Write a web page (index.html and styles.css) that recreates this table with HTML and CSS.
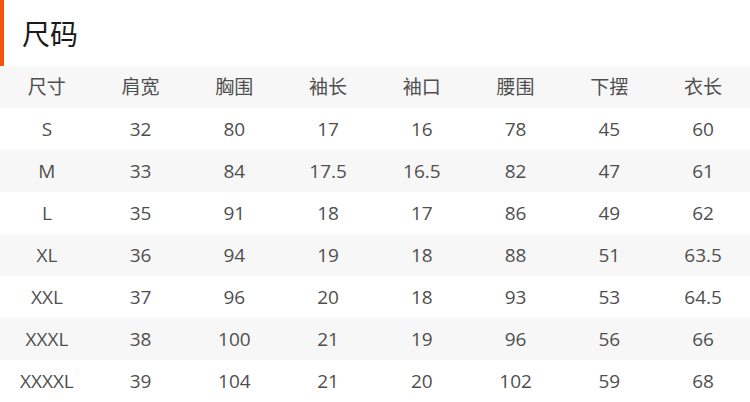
FILE: index.html
```html
<!DOCTYPE html>
<html lang="zh">
<head>
<meta charset="utf-8">
<link rel="stylesheet" href="styles.css">
</head>
<body>
<div class="title">尺码</div>
<table class="size">
<thead>
<tr><th>尺寸</th><th>肩宽</th><th>胸围</th><th>袖长</th><th>袖口</th><th>腰围</th><th>下摆</th><th>衣长</th></tr>
</thead>
<tbody>
<tr><td>S</td><td>32</td><td>80</td><td>17</td><td>16</td><td>78</td><td>45</td><td>60</td></tr>
<tr><td>M</td><td>33</td><td>84</td><td>17.5</td><td>16.5</td><td>82</td><td>47</td><td>61</td></tr>
<tr><td>L</td><td>35</td><td>91</td><td>18</td><td>17</td><td>86</td><td>49</td><td>62</td></tr>
<tr><td>XL</td><td>36</td><td>94</td><td>19</td><td>18</td><td>88</td><td>51</td><td>63.5</td></tr>
<tr><td>XXL</td><td>37</td><td>96</td><td>20</td><td>18</td><td>93</td><td>53</td><td>64.5</td></tr>
<tr><td>XXXL</td><td>38</td><td>100</td><td>21</td><td>19</td><td>96</td><td>56</td><td>66</td></tr>
<tr><td>XXXXL</td><td>39</td><td>104</td><td>21</td><td>20</td><td>102</td><td>59</td><td>68</td></tr>
</tbody>
</table>
</body>
</html>
```
FILE: styles.css
```css
html, body {
  margin: 0;
  padding: 0;
  background: #fff;
  width: 750px;
  overflow: hidden;
}
body {
  font-family: "Open Sans", "Noto Sans CJK SC", sans-serif;
}
.title {
  height: 66px;
  box-sizing: border-box;
  border-left: 4px solid #f0550f;
  padding-left: 18px;
  font-size: 28px;
  line-height: 68px;
  color: #1a1a1a;
}
.size {
  width: 750px;
  border-collapse: collapse;
  table-layout: fixed;
}
.size th, .size td {
  height: 42px;
  padding: 0;
  text-align: center;
  vertical-align: middle;
  font-size: 19px;
  font-weight: normal;
  color: #4f4f4f;
  line-height: 42px;
}
.size thead tr,
.size tbody tr:nth-child(even) {
  background: #f7f7f7;
}
```
